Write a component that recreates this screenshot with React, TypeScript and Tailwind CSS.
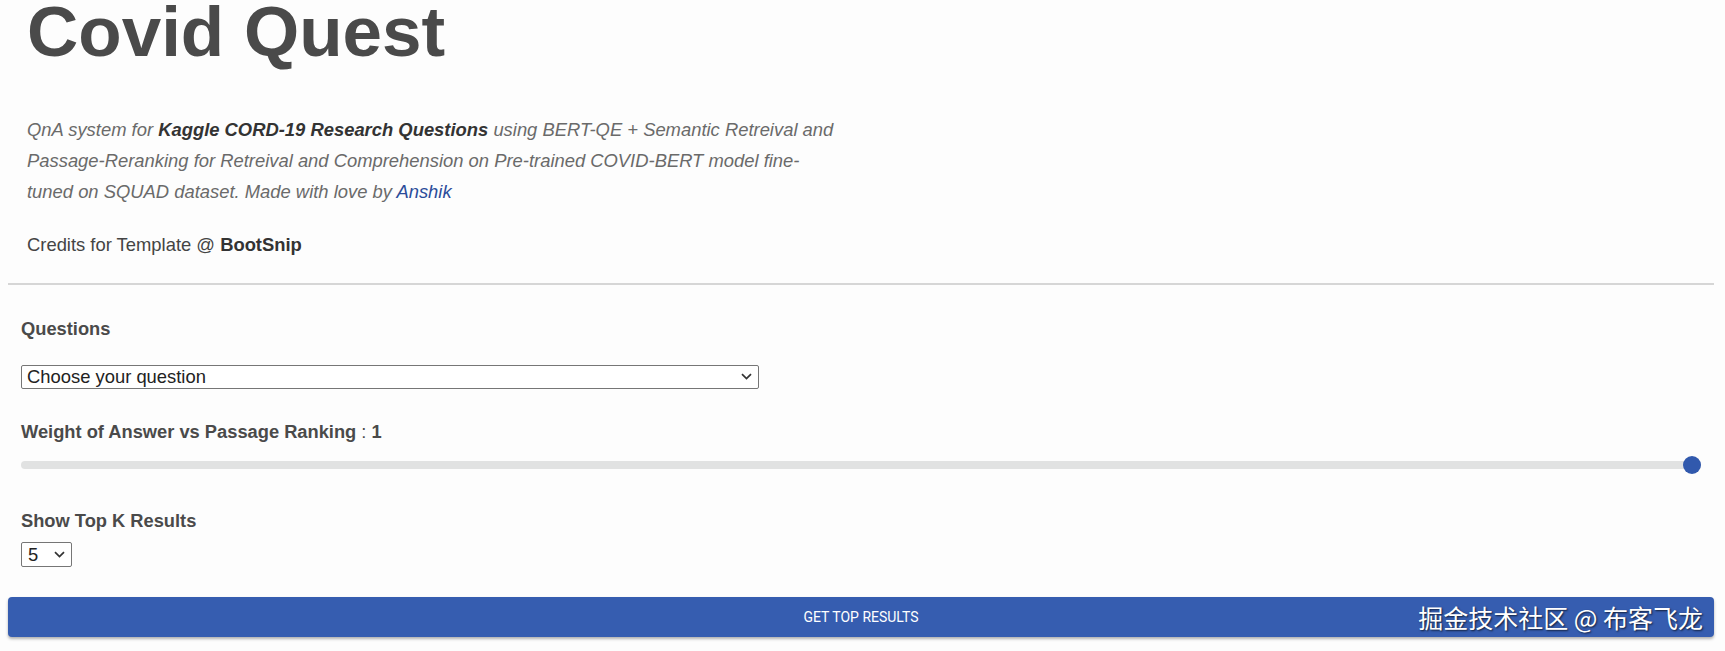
import { useState } from "react";

const SANS = "font-['Liberation_Sans',Arial,sans-serif]";

export default function App() {
  const [question, setQuestion] = useState("");
  const [topK, setTopK] = useState("5");

  return (
    <div className={`min-h-[651px] bg-[#fdfdfd] pl-[8px] pr-[11px] ${SANS}`}>
      {/* Header */}
      <header className="pl-[19px]">
        <h1 className="text-[71px] leading-[64px] font-bold text-[#4a4a4a]">Covid Quest</h1>
        <p className="mt-[50px] max-w-[812px] text-[18.4px] leading-[31px] italic text-[#6a6a6a]">
          QnA system for <b className="text-[#333]">Kaggle CORD-19 Research Questions</b> using BERT-QE +
          Semantic Retreival and Passage-Reranking for Retreival and Comprehension on Pre-trained
          COVID-BERT model fine-tuned on SQUAD dataset. Made with love by{" "}
          <a href="#" className="text-[#2b4c9a]">
            Anshik
          </a>
        </p>
        <p className="mt-[22px] text-[18.4px] leading-[31px] text-[#444]">
          Credits for Template @ <b className="text-[#333]">BootSnip</b>
        </p>
      </header>

      <hr className="mt-[23px] border-t-2 border-[#d6d6d6]" />

      {/* Form */}
      <section className="px-[13px] text-[18.3px] leading-[21px]">
        <label className="mt-[33px] block font-bold text-[#4a4a4a]">Questions</label>
        <div className="relative mt-[26px] w-[738px]">
          <select
            value={question}
            onChange={(e) => setQuestion(e.target.value)}
            className="block h-[24px] w-full appearance-none rounded-[2px] border border-[#767676] bg-white pl-[5px] text-[18.4px] leading-[22px] text-[#222]"
          >
            <option value="">Choose your question</option>
          </select>
          <Chevron className="pointer-events-none absolute right-[7px] top-[8px]" />
        </div>

        <p className="mt-[32px] font-bold text-[#4a4a4a]">
          Weight of Answer vs Passage Ranking <span className="font-normal">:</span> 1
        </p>

        {/* Slider at max value */}
        <div className="relative mt-[14px] flex h-[18px] items-center">
          <div className="h-[8px] flex-1 rounded-full bg-[#e1e2e2]" />
          <div className="absolute right-0 top-0 h-[18px] w-[18px] rounded-full bg-[#3159ad]" />
        </div>

        <p className="mt-[36px] font-bold text-[#4a4a4a]">Show Top K Results</p>
        <div className="relative mt-[11px] w-[51px]">
          <select
            value={topK}
            onChange={(e) => setTopK(e.target.value)}
            className="block h-[25px] w-full appearance-none rounded-[2px] border border-[#767676] bg-white pl-[6px] text-[18.4px] leading-[23px] text-[#222]"
          >
            {["1", "3", "5", "10"].map((k) => (
              <option key={k} value={k}>
                {k}
              </option>
            ))}
          </select>
          <Chevron className="pointer-events-none absolute right-[7px] top-[9px]" />
        </div>
      </section>

      <button className="relative mt-[30px] flex h-[40px] w-full items-center justify-center rounded-[4px] bg-[#365db0] font-['Roboto',sans-serif] text-[14px] font-normal uppercase text-white shadow-[0_2px_3px_rgba(0,0,0,0.3)]">
        Get Top Results
        <span className="absolute right-[11px] top-1/2 -translate-y-1/2 font-['Noto_Sans_CJK_SC',sans-serif] text-[25px] font-normal leading-none normal-case text-white [text-shadow:1px_1px_2px_rgba(0,0,0,0.7)]">
          掘金技术社区 @ 布客飞龙
        </span>
      </button>
    </div>
  );
}

function Chevron({ className }: { className?: string }) {
  return (
    <svg width="11" height="7" viewBox="0 0 11 7" className={className}>
      <path d="M1 1.2 L5.5 5.6 L10 1.2" fill="none" stroke="#333" strokeWidth="1.7" />
    </svg>
  );
}
